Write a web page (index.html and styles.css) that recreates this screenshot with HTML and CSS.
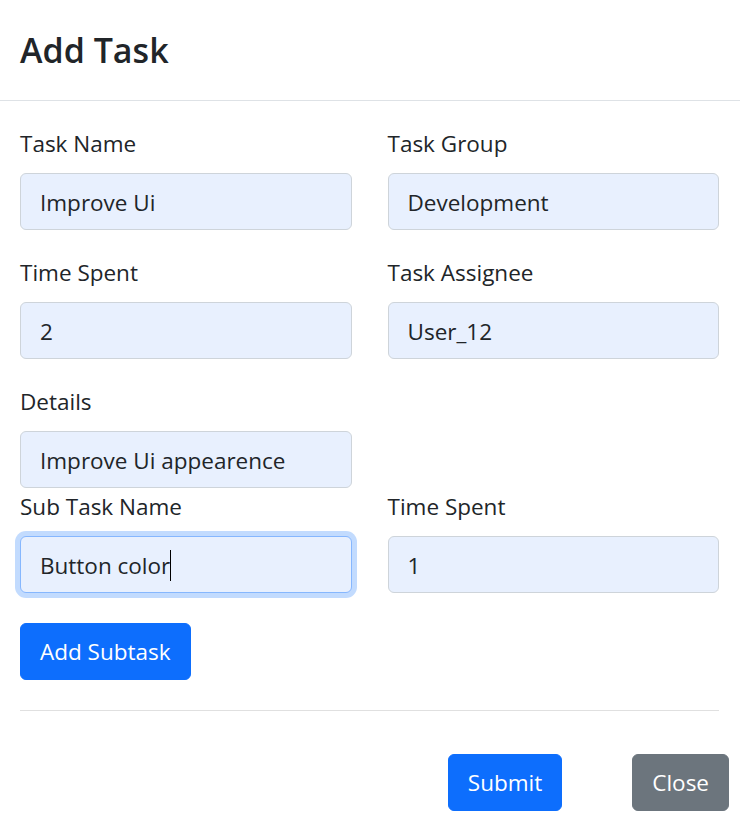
FILE: index.html
```html
<!DOCTYPE html>
<html lang="en">
<head>
<meta charset="utf-8">
<title>Add Task</title>
<link rel="stylesheet" href="styles.css">
</head>
<body>
<div class="modal">
  <div class="modal-header">
    <h4 class="modal-title">Add Task</h4>
  </div>
  <div class="modal-body">
    <div class="grid">
      <div class="field">
        <label class="form-label">Task Name</label>
        <div class="form-control">Improve Ui</div>
      </div>
      <div class="field">
        <label class="form-label">Task Group</label>
        <div class="form-control">Development</div>
      </div>
      <div class="field">
        <label class="form-label">Time Spent</label>
        <div class="form-control">2</div>
      </div>
      <div class="field">
        <label class="form-label">Task Assignee</label>
        <div class="form-control">User_12</div>
      </div>
      <div class="field">
        <label class="form-label">Details</label>
        <div class="form-control">Improve Ui appearence</div>
      </div>
    </div>
    <div class="grid sub">
      <div class="field tight">
        <label class="form-label">Sub Task Name</label>
        <div class="form-control focused">Button color<span class="caret"></span></div>
      </div>
      <div class="field tight">
        <label class="form-label">Time Spent</label>
        <div class="form-control">1</div>
      </div>
    </div>
    <button class="btn btn-primary add-btn">Add Subtask</button>
    <hr class="divider">
  </div>
  <div class="modal-footer">
    <button class="btn btn-primary">Submit</button>
    <button class="btn btn-secondary">Close</button>
  </div>
</div>
</body>
</html>
```
FILE: styles.css
```css
* { box-sizing: border-box; }
html, body { margin: 0; padding: 0; background: #fff; }
body {
  font-family: "Open Sans", "Noto Sans", sans-serif;
  font-size: 22.5px;
  line-height: 36px;
  color: #212529;
}
.modal { width: 740px; }
.modal-header {
  padding: 26px 20px 26px;
  border-bottom: 1px solid #dee2e6;
}
.modal-title {
  margin: 0;
  font-size: 34px;
  line-height: 48px;
  font-weight: 600;
}
.modal-body {
  padding: 24px 21px 0 20px;
}
.grid {
  display: grid;
  grid-template-columns: 1fr 1fr;
  column-gap: 36px;
}
.field { margin-bottom: 24px; }
.field.tight { margin-bottom: 0; }
.grid .field:nth-child(5) { margin-bottom: 0; }
.form-label {
  display: block;
  padding-top: 1px;
  margin-bottom: 11px;
}
.form-control {
  height: 57px;
  padding: 11px 19px 10px;
  border: 1px solid #ced4da;
  border-radius: 6px;
  background: #e8f0fe;
  white-space: nowrap;
  overflow: hidden;
}
.form-control.focused {
  border-color: #86b7fe;
  box-shadow: 0 0 0 5px rgba(13, 110, 253, 0.25);
}
.caret {
  display: inline-block;
  width: 1px;
  height: 31px;
  background: #000;
  vertical-align: -7px;
}
.btn {
  font-family: inherit;
  font-size: 22.5px;
  line-height: 36px;
  height: 57px;
  padding: 1px 19px 0;
  border: 1px solid transparent;
  border-radius: 6px;
  color: #fff;
  cursor: pointer;
}
.btn-primary { background: #0d6efd; border-color: #0d6efd; }
.btn-secondary { background: #6c757d; border-color: #6c757d; }
.add-btn { display: block; margin-top: 30px; }
.divider {
  margin: 30px 0 0;
  border: 0;
  border-top: 1px solid #e0e0e0;
}
.modal-footer {
  display: flex;
  justify-content: flex-end;
  gap: 70px;
  padding: 43px 11px 0 0;
}
```
